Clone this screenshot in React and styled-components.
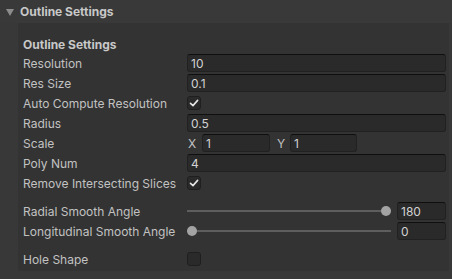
import React from "react";
import styled, { createGlobalStyle } from "styled-components";

const Global = createGlobalStyle`
  html, body { margin: 0; padding: 0; background: #383838; }
  body { font-family: Inter, "Noto Sans", sans-serif; font-size: 12px; color: #c4c4c4; }
  * { box-sizing: border-box; }
`;

const Page = styled.div`
  width: 452px;
  height: 279px;
  background: #383838;
  overflow: hidden;
`;

const Header = styled.div`
  height: 23px;
  display: flex;
  align-items: center;
  padding-left: 6px;
  gap: 6px;
  font-weight: 700;
  color: #c8c8c8;
  background: #393939;
`;

const Triangle = styled.div`
  width: 0;
  height: 0;
  border-left: 4px solid transparent;
  border-right: 4px solid transparent;
  border-top: 7px solid #8c8c8c;
  margin-top: 1px;
`;

const Panel = styled.div`
  margin: 0 3px 0 18px;
  height: 248px;
  background: #333333;
  padding: 12px 3px 2px 5px;
  display: flex;
  flex-direction: column;
`;

const SubHeader = styled.div`
  height: 18px;
  display: flex;
  align-items: center;
  padding-top: 1px;
  font-weight: 700;
  color: #c8c8c8;
`;

const Row = styled.div`
  height: 20px;
  display: flex;
  align-items: center;
  margin-top: ${(p) => (p.$gap ? "8px" : "0")};
`;

const Label = styled.div`
  width: 164px;
  flex: none;
  color: #c2c2c2;
  white-space: nowrap;
`;

const Field = styled.div`
  height: 18px;
  flex: ${(p) => (p.$w ? "none" : "1")};
  width: ${(p) => (p.$w ? `${p.$w}px` : "auto")};
  background: #2a2a2a;
  border: 1px solid #212121;
  border-top-color: #0f0f0f;
  border-radius: 3px;
  display: flex;
  align-items: center;
  padding-left: 3px;
  color: #d2d2d2;
`;

const Check = styled.div`
  width: 14px;
  height: 14px;
  background: #2a2a2a;
  border: 1px solid #1f1f1f;
  border-radius: 3px;
  display: flex;
  align-items: center;
  justify-content: center;
`;

const Axis = styled.span`
  width: ${(p) => p.$w}px;
  flex: none;
  padding-left: ${(p) => p.$pl}px;
  color: #c2c2c2;
`;

const Vector = styled.div`
  flex: 1;
  display: flex;
  align-items: center;
`;

const SliderWrap = styled.div`
  flex: 1;
  display: flex;
  align-items: center;
  gap: 6px;
`;

const Track = styled.div`
  position: relative;
  flex: 1;
  height: 2px;
  background: #5e5e5e;
`;

const Knob = styled.div`
  position: absolute;
  top: -4px;
  width: 10px;
  height: 10px;
  border-radius: 50%;
  background: #a3a3a3;
`;

const CheckMark = () => (
  <svg width="10" height="10" viewBox="0 0 10 10">
    <path d="M1.5 5.3 L4 7.6 L8.6 2.4" fill="none" stroke="#e6e6e6" strokeWidth="1.6" strokeLinecap="round" strokeLinejoin="round" />
  </svg>
);

const Slider = ({ pct, value }) => (
  <SliderWrap>
    <Track>
      <Knob style={{ left: `calc(${pct} * (100% - 10px))` }} />
    </Track>
    <Field $w={49}>{value}</Field>
  </SliderWrap>
);

export default function App() {
  return (
    <Page>
      <Global />
      <Header>
        <Triangle />
        <span>Outline Settings</span>
      </Header>
      <Panel>
        <SubHeader>Outline Settings</SubHeader>
        <Row>
          <Label>Resolution</Label>
          <Field>10</Field>
        </Row>
        <Row>
          <Label>Res Size</Label>
          <Field>0.1</Field>
        </Row>
        <Row>
          <Label>Auto Compute Resolution</Label>
          <Check><CheckMark /></Check>
        </Row>
        <Row>
          <Label>Radius</Label>
          <Field>0.5</Field>
        </Row>
        <Row>
          <Label>Scale</Label>
          <Vector>
            <Axis $w={15} $pl={1}>X</Axis>
            <Field $w={68}>1</Field>
            <Axis $w={20} $pl={7}>Y</Axis>
            <Field $w={67}>1</Field>
          </Vector>
        </Row>
        <Row>
          <Label>Poly Num</Label>
          <Field>4</Field>
        </Row>
        <Row>
          <Label>Remove Intersecting Slices</Label>
          <Check><CheckMark /></Check>
        </Row>
        <Row $gap>
          <Label>Radial Smooth Angle</Label>
          <Slider pct={1} value="180" />
        </Row>
        <Row>
          <Label>Longitudinal Smooth Angle</Label>
          <Slider pct={0} value="0" />
        </Row>
        <Row $gap>
          <Label>Hole Shape</Label>
          <Check />
        </Row>
      </Panel>
    </Page>
  );
}
